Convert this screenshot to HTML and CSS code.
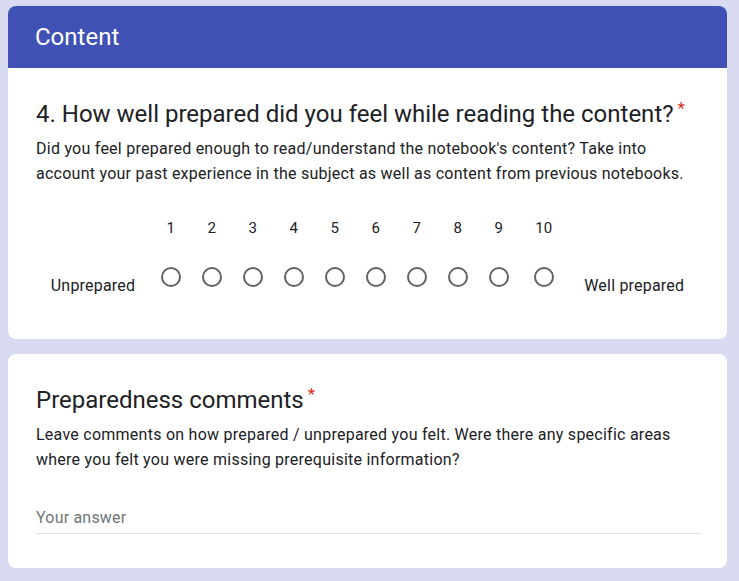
FILE: index.html
```html
<!DOCTYPE html>
<html lang="en">
<head>
<meta charset="utf-8">
<title>Content</title>
<link rel="stylesheet" href="styles.css">
</head>
<body>
<main class="form">
  <section class="card">
    <header class="card-header">Content</header>
    <div class="card-body card-body-scale">
      <h2 class="q-title">4. How well prepared did you feel while reading the content?<span class="req">*</span></h2>
      <p class="q-desc">Did you feel prepared enough to read/understand the notebook's content? Take into account your past experience in the subject as well as content from previous notebooks.</p>
      <div class="scale">
        <span class="scale-label scale-label-left">Unprepared</span>
        <div class="scale-col"><span class="scale-num">1</span><span class="radio"></span></div>
        <div class="scale-col"><span class="scale-num">2</span><span class="radio"></span></div>
        <div class="scale-col"><span class="scale-num">3</span><span class="radio"></span></div>
        <div class="scale-col"><span class="scale-num">4</span><span class="radio"></span></div>
        <div class="scale-col"><span class="scale-num">5</span><span class="radio"></span></div>
        <div class="scale-col"><span class="scale-num">6</span><span class="radio"></span></div>
        <div class="scale-col"><span class="scale-num">7</span><span class="radio"></span></div>
        <div class="scale-col"><span class="scale-num">8</span><span class="radio"></span></div>
        <div class="scale-col"><span class="scale-num">9</span><span class="radio"></span></div>
        <div class="scale-col scale-col-wide"><span class="scale-num">10</span><span class="radio"></span></div>
        <span class="scale-label scale-label-right">Well prepared</span>
      </div>
    </div>
  </section>
  <section class="card">
    <div class="card-body card-body-text">
      <h2 class="q-title">Preparedness comments<span class="req">*</span></h2>
      <p class="q-desc">Leave comments on how prepared / unprepared you felt. Were there any specific areas where you felt you were missing prerequisite information?</p>
      <div class="answer">Your answer</div>
    </div>
  </section>
</main>
</body>
</html>
```
FILE: styles.css
```css
html, body {
  margin: 0;
  padding: 0;
}
body {
  background: #d9dbf1;
  font-family: Roboto, "Liberation Sans", Arial, sans-serif;
  color: #202124;
  height: 581px;
  overflow: hidden;
}
.form {
  display: flex;
  flex-direction: column;
  gap: 15px;
  width: 719px;
  padding: 6px 0 0 8px;
}
.card {
  background: #ffffff;
  border-radius: 8px;
  overflow: hidden;
}
.card-header {
  background: #3f51b5;
  color: #ffffff;
  font-size: 24px;
  line-height: 62px;
  height: 62px;
  padding-left: 27px;
}
.card-body {
  padding: 30px 27px 0 28px;
}
.card-body-scale {
  height: 241px;
}
.card-body-text {
  height: 184px;
}
.q-title {
  margin: 0;
  font-size: 24px;
  font-weight: 400;
  line-height: 32px;
  letter-spacing: 0;
}
.req {
  color: #d93025;
  font-size: 17px;
  vertical-align: top;
  line-height: 20px;
  margin-left: 4px;
}
.q-desc {
  margin: 6px 0 0;
  font-size: 16px;
  line-height: 25px;
  letter-spacing: 0.25px;
}
.scale {
  display: flex;
  justify-content: center;
  align-items: flex-start;
  margin-top: 32px;
  margin-left: -1px;
}
.scale-label {
  font-size: 16px;
  line-height: 24px;
  padding-top: 56px;
  letter-spacing: 0.2px;
}
.scale-label-left {
  padding-right: 15px;
}
.scale-label-right {
  padding-left: 16px;
}
.scale-col {
  display: flex;
  flex-direction: column;
  align-items: center;
  width: 41px;
}
.scale-col-wide {
  width: 49px;
}
.scale-num {
  font-size: 15px;
  line-height: 20px;
}
.radio {
  box-sizing: border-box;
  width: 20px;
  height: 20px;
  border: 2px solid #5f6368;
  border-radius: 50%;
  margin-top: 29px;
}
.answer {
  margin-top: 34px;
  font-size: 16px;
  line-height: 24px;
  color: #70757a;
  padding-bottom: 3px;
  border-bottom: 1px solid #e0e0e0;
  margin-right: -1px;
  letter-spacing: 0.2px;
}
```
